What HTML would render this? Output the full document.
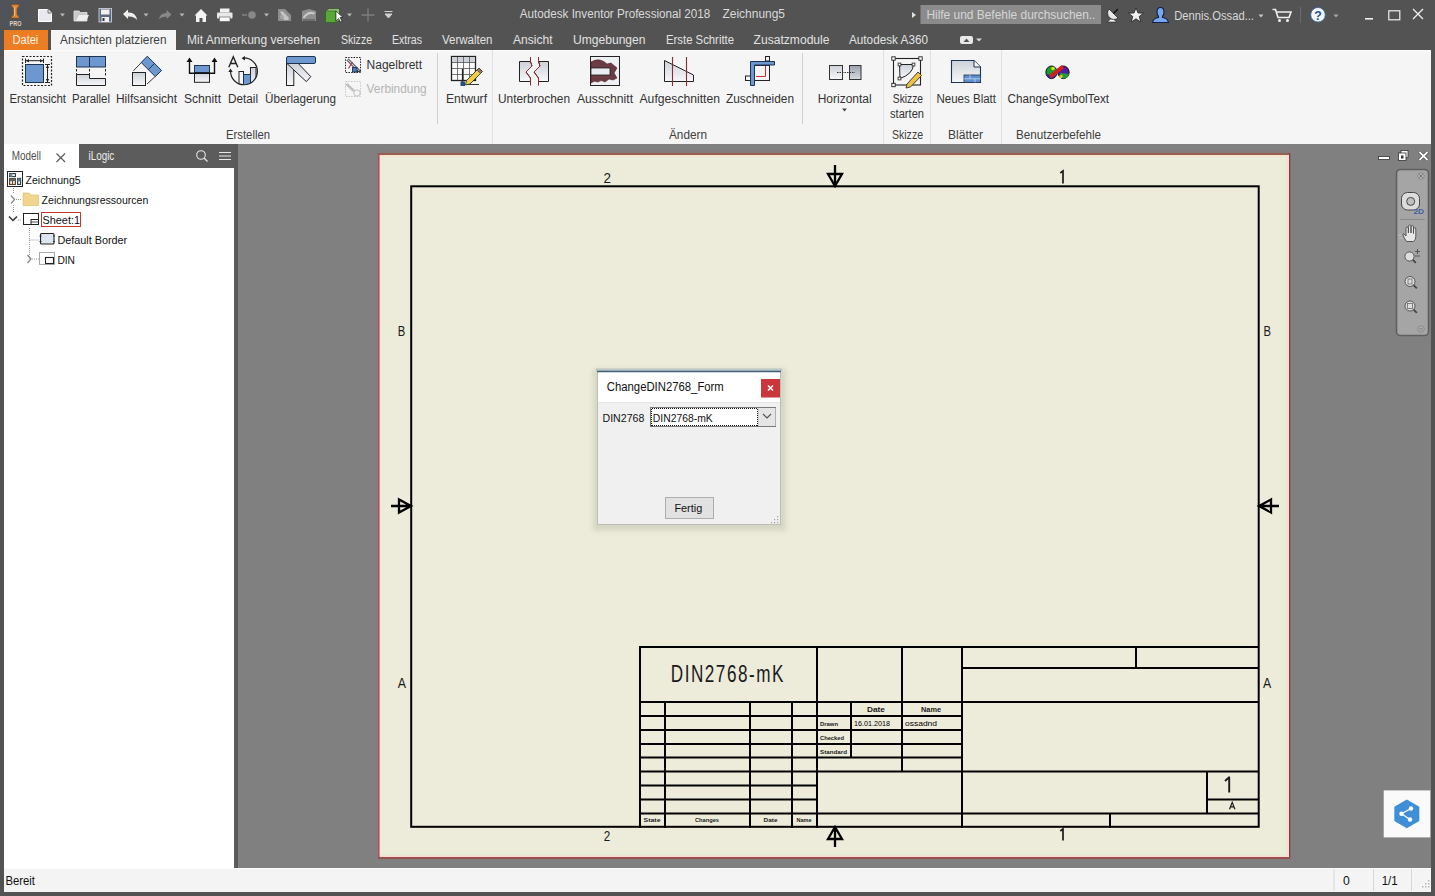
<!DOCTYPE html>
<html><head><meta charset="utf-8"><style>
html,body{margin:0;padding:0;width:1435px;height:896px;overflow:hidden;background:#535353;}
svg{display:block;font-family:"Liberation Sans", sans-serif;}
</style></head><body>
<svg width="1435" height="896" viewBox="0 0 1435 896"><defs><filter id="blur" x="-20%" y="-20%" width="140%" height="140%"><feGaussianBlur stdDeviation="2.5"/></filter><linearGradient id="lg" x1="0" y1="0" x2="0" y2="1"><stop offset="0" stop-color="#cdd2d9"/><stop offset="1" stop-color="#f6f7f9"/></linearGradient><linearGradient id="lg2" x1="0" y1="0" x2="0" y2="1"><stop offset="0" stop-color="#9aa2ac"/><stop offset="1" stop-color="#d8dce2"/></linearGradient></defs>
<rect x="0" y="0" width="1435" height="896" fill="#535353" />
<rect x="4" y="50" width="1427" height="94" fill="#f5f5f5" />
<rect x="4" y="50" width="1427" height="1.5" fill="#fcfcfc" />
<rect x="51" y="30" width="125" height="20" fill="#f5f5f5" />
<rect x="4" y="30" width="44" height="20" fill="#ec7d22" />
<rect x="4" y="144" width="75" height="24" fill="#ffffff" />
<rect x="79" y="144" width="155" height="24" fill="#5c5c5c" />
<rect x="4" y="168" width="230" height="700" fill="#ffffff" />
<rect x="238" y="144" width="1193" height="724" fill="#808080" />
<rect x="4" y="868" width="1427" height="24" fill="#f4f4f4" />
<rect x="4" y="868" width="1427" height="1" fill="#fbfbfb" />
<text x="519.8" y="18" font-size="12" fill="#dadada" font-weight="normal" text-anchor="start" textLength="190.5" lengthAdjust="spacingAndGlyphs" >Autodesk Inventor Professional 2018</text>
<text x="722.5" y="18" font-size="12" fill="#dadada" font-weight="normal" text-anchor="start" textLength="62.5" lengthAdjust="spacingAndGlyphs" >Zeichnung5</text>
<rect x="920.5" y="5" width="180.5" height="19" fill="#8b8b8b" />
<text x="926.4" y="19" font-size="12" fill="#d6d6d6" font-weight="normal" text-anchor="start" textLength="169" lengthAdjust="spacingAndGlyphs" >Hilfe und Befehle durchsuchen..</text>
<path d="M912 12 L916 15 L912 18 Z" fill="#e0e0e0"/>
<text x="1174.2" y="19.5" font-size="12" fill="#d8d8d8" font-weight="normal" text-anchor="start" textLength="79.8" lengthAdjust="spacingAndGlyphs" >Dennis.Ossad...</text>
<text x="12.5" y="43.5" font-size="12" fill="#fff3e6" font-weight="normal" text-anchor="start" textLength="25.8" lengthAdjust="spacingAndGlyphs" >Datei</text>
<text x="60" y="43.5" font-size="12" fill="#404040" font-weight="normal" text-anchor="start" textLength="106.5" lengthAdjust="spacingAndGlyphs" >Ansichten platzieren</text>
<text x="187" y="43.5" font-size="12" fill="#e2e2e2" font-weight="normal" text-anchor="start" textLength="133" lengthAdjust="spacingAndGlyphs" >Mit Anmerkung versehen</text>
<text x="341" y="43.5" font-size="12" fill="#e2e2e2" font-weight="normal" text-anchor="start" textLength="31" lengthAdjust="spacingAndGlyphs" >Skizze</text>
<text x="392" y="43.5" font-size="12" fill="#e2e2e2" font-weight="normal" text-anchor="start" textLength="30" lengthAdjust="spacingAndGlyphs" >Extras</text>
<text x="442" y="43.5" font-size="12" fill="#e2e2e2" font-weight="normal" text-anchor="start" textLength="50.4" lengthAdjust="spacingAndGlyphs" >Verwalten</text>
<text x="513" y="43.5" font-size="12" fill="#e2e2e2" font-weight="normal" text-anchor="start" textLength="39.6" lengthAdjust="spacingAndGlyphs" >Ansicht</text>
<text x="573" y="43.5" font-size="12" fill="#e2e2e2" font-weight="normal" text-anchor="start" textLength="72.5" lengthAdjust="spacingAndGlyphs" >Umgebungen</text>
<text x="666" y="43.5" font-size="12" fill="#e2e2e2" font-weight="normal" text-anchor="start" textLength="68" lengthAdjust="spacingAndGlyphs" >Erste Schritte</text>
<text x="753.6" y="43.5" font-size="12" fill="#e2e2e2" font-weight="normal" text-anchor="start" textLength="75.9" lengthAdjust="spacingAndGlyphs" >Zusatzmodule</text>
<text x="849" y="43.5" font-size="12" fill="#e2e2e2" font-weight="normal" text-anchor="start" textLength="79" lengthAdjust="spacingAndGlyphs" >Autodesk A360</text>
<text x="9.4" y="102.7" font-size="12" fill="#333" font-weight="normal" text-anchor="start" textLength="56.6" lengthAdjust="spacingAndGlyphs" >Erstansicht</text>
<text x="72" y="102.7" font-size="12" fill="#333" font-weight="normal" text-anchor="start" textLength="38" lengthAdjust="spacingAndGlyphs" >Parallel</text>
<text x="116" y="102.7" font-size="12" fill="#333" font-weight="normal" text-anchor="start" textLength="61" lengthAdjust="spacingAndGlyphs" >Hilfsansicht</text>
<text x="184" y="102.7" font-size="12" fill="#333" font-weight="normal" text-anchor="start" textLength="37" lengthAdjust="spacingAndGlyphs" >Schnitt</text>
<text x="228" y="102.7" font-size="12" fill="#333" font-weight="normal" text-anchor="start" textLength="30" lengthAdjust="spacingAndGlyphs" >Detail</text>
<text x="265" y="102.7" font-size="12" fill="#333" font-weight="normal" text-anchor="start" textLength="71" lengthAdjust="spacingAndGlyphs" >Überlagerung</text>
<text x="446" y="102.7" font-size="12" fill="#333" font-weight="normal" text-anchor="start" textLength="41" lengthAdjust="spacingAndGlyphs" >Entwurf</text>
<text x="498" y="102.7" font-size="12" fill="#333" font-weight="normal" text-anchor="start" textLength="72" lengthAdjust="spacingAndGlyphs" >Unterbrochen</text>
<text x="577" y="102.7" font-size="12" fill="#333" font-weight="normal" text-anchor="start" textLength="56" lengthAdjust="spacingAndGlyphs" >Ausschnitt</text>
<text x="639.5" y="102.7" font-size="12" fill="#333" font-weight="normal" text-anchor="start" textLength="80.5" lengthAdjust="spacingAndGlyphs" >Aufgeschnitten</text>
<text x="726" y="102.7" font-size="12" fill="#333" font-weight="normal" text-anchor="start" textLength="68" lengthAdjust="spacingAndGlyphs" >Zuschneiden</text>
<text x="817.7" y="102.7" font-size="12" fill="#333" font-weight="normal" text-anchor="start" textLength="54" lengthAdjust="spacingAndGlyphs" >Horizontal</text>
<text x="892.8" y="102.7" font-size="12" fill="#333" font-weight="normal" text-anchor="start" textLength="30.2" lengthAdjust="spacingAndGlyphs" >Skizze</text>
<text x="936.5" y="102.7" font-size="12" fill="#333" font-weight="normal" text-anchor="start" textLength="59.5" lengthAdjust="spacingAndGlyphs" >Neues Blatt</text>
<text x="1007.5" y="102.7" font-size="12" fill="#333" font-weight="normal" text-anchor="start" textLength="101.5" lengthAdjust="spacingAndGlyphs" >ChangeSymbolText</text>
<text x="890" y="117.6" font-size="12" fill="#333" font-weight="normal" text-anchor="start" textLength="34" lengthAdjust="spacingAndGlyphs" >starten</text>
<text x="366.6" y="68.7" font-size="12" fill="#333" font-weight="normal" text-anchor="start" textLength="55.4" lengthAdjust="spacingAndGlyphs" >Nagelbrett</text>
<text x="366.6" y="92.8" font-size="12" fill="#b4b4b4" font-weight="normal" text-anchor="start" textLength="60" lengthAdjust="spacingAndGlyphs" >Verbindung</text>
<text x="226" y="138.6" font-size="12" fill="#404040" font-weight="normal" text-anchor="start" textLength="44" lengthAdjust="spacingAndGlyphs" >Erstellen</text>
<text x="669" y="138.6" font-size="12" fill="#404040" font-weight="normal" text-anchor="start" textLength="38" lengthAdjust="spacingAndGlyphs" >Ändern</text>
<text x="892" y="138.6" font-size="12" fill="#404040" font-weight="normal" text-anchor="start" textLength="31" lengthAdjust="spacingAndGlyphs" >Skizze</text>
<text x="948" y="138.6" font-size="12" fill="#404040" font-weight="normal" text-anchor="start" textLength="35" lengthAdjust="spacingAndGlyphs" >Blätter</text>
<text x="1016" y="138.6" font-size="12" fill="#404040" font-weight="normal" text-anchor="start" textLength="85" lengthAdjust="spacingAndGlyphs" >Benutzerbefehle</text>
<line x1="492.5" y1="50" x2="492.5" y2="144" stroke="#e0e0e0" stroke-width="1" />
<line x1="883.5" y1="50" x2="883.5" y2="144" stroke="#e0e0e0" stroke-width="1" />
<line x1="930.5" y1="50" x2="930.5" y2="144" stroke="#e0e0e0" stroke-width="1" />
<line x1="1001.5" y1="50" x2="1001.5" y2="144" stroke="#e0e0e0" stroke-width="1" />
<line x1="437.5" y1="53" x2="437.5" y2="124" stroke="#d0d0d0" stroke-width="1" />
<line x1="802.5" y1="53" x2="802.5" y2="124" stroke="#d0d0d0" stroke-width="1" />
<path d="M842 108.5 L847 108.5 L844.5 111.5 Z" fill="#444"/>
<text x="11.8" y="159.7" font-size="12" fill="#505050" font-weight="normal" text-anchor="start" textLength="29.2" lengthAdjust="spacingAndGlyphs" >Modell</text>
<path d="M56.5 153.5 L65 162 M65 153.5 L56.5 162" stroke="#555" stroke-width="1.1"/>
<text x="88.5" y="159.7" font-size="12" fill="#ececec" font-weight="normal" text-anchor="start" textLength="25.8" lengthAdjust="spacingAndGlyphs" >iLogic</text>
<circle cx="201" cy="155" r="4.3" fill="none" stroke="#e8e8e8" stroke-width="1.1"/><path d="M204 158 L207.5 161.5" stroke="#e8e8e8" stroke-width="1.3"/>
<path d="M219 152.5 H231 M219 156 H231 M219 159.5 H231" stroke="#e8e8e8" stroke-width="1.1"/>
<rect x="234" y="144" width="4" height="724" fill="#5a5a5a" />
<text x="25.6" y="183.8" font-size="11" fill="#111" font-weight="normal" text-anchor="start" textLength="55" lengthAdjust="spacingAndGlyphs" >Zeichnung5</text>
<text x="41.6" y="203.7" font-size="11" fill="#111" font-weight="normal" text-anchor="start" textLength="106.7" lengthAdjust="spacingAndGlyphs" >Zeichnungsressourcen</text>
<text x="42.5" y="223.6" font-size="11" fill="#111" font-weight="normal" text-anchor="start" textLength="37.5" lengthAdjust="spacingAndGlyphs" >Sheet:1</text>
<text x="57.4" y="243.5" font-size="11" fill="#111" font-weight="normal" text-anchor="start" textLength="69.8" lengthAdjust="spacingAndGlyphs" >Default Border</text>
<text x="57.4" y="263.5" font-size="11" fill="#111" font-weight="normal" text-anchor="start" textLength="17.6" lengthAdjust="spacingAndGlyphs" >DIN</text>
<rect x="41.5" y="212.5" width="39" height="14" fill="none" stroke="#c0392b" stroke-width="1"/>
<text x="5.5" y="884.6" font-size="12" fill="#111" font-weight="normal" text-anchor="start" textLength="29.5" lengthAdjust="spacingAndGlyphs" >Bereit</text>
<text x="1343" y="884.5" font-size="12" fill="#111" font-weight="normal" text-anchor="start" textLength="6.8" lengthAdjust="spacingAndGlyphs" >0</text>
<text x="1381.7" y="884.5" font-size="12" fill="#111" font-weight="normal" text-anchor="start" textLength="16" lengthAdjust="spacingAndGlyphs" >1/1</text>
<line x1="1334" y1="869" x2="1334" y2="891" stroke="#d8d8d8" stroke-width="1" />
<line x1="1373.5" y1="869" x2="1373.5" y2="891" stroke="#d8d8d8" stroke-width="1" />
<line x1="1411.5" y1="869" x2="1411.5" y2="891" stroke="#d8d8d8" stroke-width="1" />
<rect x="378" y="154" width="912" height="704" fill="#edecda" />
<rect x="1282" y="156" width="5" height="700" fill="#e6efd6" />
<rect x="380" y="853" width="906" height="3" fill="#e8edd8" />
<rect x="1286.5" y="155" width="2.5" height="702" fill="#f8dcd4" />
<rect x="379" y="855.5" width="910" height="1.5" fill="#f8dcd4" />
<rect x="379" y="155" width="910" height="2" fill="#f9e2cf" />
<rect x="378" y="150.5" width="912" height="2.5" fill="#857a7e" />
<rect x="378" y="153" width="912" height="2" fill="#96604f" />
<rect x="378" y="153" width="1.6" height="706" fill="#c24858" />
<rect x="1289" y="153" width="1.3" height="706" fill="#8a3a3a" />
<rect x="378" y="857" width="912" height="2" fill="#9b5050" />
<rect x="411.2" y="186.3" width="847.5" height="640.5" fill="none" stroke="#000" stroke-width="2"/>
<path d="M835 165 V186 M828 174 H842 L835 186 Z" stroke="#000" stroke-width="2.3" fill="none" stroke-linejoin="miter"/>
<path d="M835 847 V827 M828 839 H842 L835 827 Z" stroke="#000" stroke-width="2.3" fill="none" stroke-linejoin="miter"/>
<path d="M391 506 H411 M399 499.5 V512.5 L411 506 Z" stroke="#000" stroke-width="2.3" fill="none" stroke-linejoin="miter"/>
<path d="M1279 506 H1259 M1271 499.5 V512.5 L1259 506 Z" stroke="#000" stroke-width="2.3" fill="none" stroke-linejoin="miter"/>
<text x="603.5" y="182.8" font-size="15.5" fill="#1a1a1a" font-weight="normal" text-anchor="start" textLength="7.5" lengthAdjust="spacingAndGlyphs" >2</text>
<path d="M1060.3 173 L1063 170.9 V183.4" fill="none" stroke="#1a1a1a" stroke-width="1.7"/>
<text x="603.7" y="840.6" font-size="15.5" fill="#1a1a1a" font-weight="normal" text-anchor="start" textLength="6.5" lengthAdjust="spacingAndGlyphs" >2</text>
<path d="M1060.3 831 L1063 828.9 V840.6" fill="none" stroke="#1a1a1a" stroke-width="1.7"/>
<text x="397.8" y="336" font-size="15.5" fill="#1a1a1a" font-weight="normal" text-anchor="start" textLength="7.5" lengthAdjust="spacingAndGlyphs" >B</text>
<text x="1263.5" y="336" font-size="15.5" fill="#1a1a1a" font-weight="normal" text-anchor="start" textLength="7.5" lengthAdjust="spacingAndGlyphs" >B</text>
<text x="397.7" y="687.6" font-size="15.5" fill="#1a1a1a" font-weight="normal" text-anchor="start" textLength="8.2" lengthAdjust="spacingAndGlyphs" >A</text>
<text x="1263" y="687.6" font-size="15.5" fill="#1a1a1a" font-weight="normal" text-anchor="start" textLength="8.2" lengthAdjust="spacingAndGlyphs" >A</text>
<line x1="639" y1="647" x2="1259" y2="647" stroke="#000" stroke-width="2"/>
<line x1="640" y1="646" x2="640" y2="828" stroke="#000" stroke-width="2"/>
<line x1="817" y1="646" x2="817" y2="828" stroke="#000" stroke-width="2"/>
<line x1="902" y1="646" x2="902" y2="771" stroke="#000" stroke-width="2"/>
<line x1="962" y1="646" x2="962" y2="828" stroke="#000" stroke-width="2"/>
<line x1="1136" y1="646" x2="1136" y2="668" stroke="#000" stroke-width="2"/>
<line x1="961" y1="668" x2="1259" y2="668" stroke="#000" stroke-width="2"/>
<line x1="639" y1="702" x2="1259" y2="702" stroke="#000" stroke-width="2"/>
<line x1="639" y1="716" x2="962" y2="716" stroke="#000" stroke-width="2"/>
<line x1="639" y1="730" x2="962" y2="730" stroke="#000" stroke-width="2"/>
<line x1="639" y1="744" x2="962" y2="744" stroke="#000" stroke-width="2"/>
<line x1="639" y1="757.5" x2="962" y2="757.5" stroke="#000" stroke-width="2"/>
<line x1="639" y1="771.5" x2="1259" y2="771.5" stroke="#000" stroke-width="2"/>
<line x1="639" y1="785.5" x2="817" y2="785.5" stroke="#000" stroke-width="2"/>
<line x1="639" y1="799.5" x2="817" y2="799.5" stroke="#000" stroke-width="2"/>
<line x1="639" y1="813.5" x2="1259" y2="813.5" stroke="#000" stroke-width="2"/>
<line x1="665" y1="701" x2="665" y2="828" stroke="#000" stroke-width="2"/>
<line x1="750" y1="701" x2="750" y2="828" stroke="#000" stroke-width="2"/>
<line x1="792" y1="701" x2="792" y2="828" stroke="#000" stroke-width="2"/>
<line x1="851" y1="701" x2="851" y2="758" stroke="#000" stroke-width="2"/>
<line x1="1207" y1="771" x2="1207" y2="814" stroke="#000" stroke-width="2"/>
<line x1="1206" y1="799.5" x2="1259" y2="799.5" stroke="#000" stroke-width="2"/>
<line x1="1110" y1="813" x2="1110" y2="828" stroke="#000" stroke-width="2"/>
<text transform="translate(670.8 681.8) scale(0.72 1)" font-size="23.8" letter-spacing="2.1" fill="#1a1a1a">DIN2768-mK</text>
<path d="M1225 781 L1229.2 777.3 V792.5" fill="none" stroke="#1a1a1a" stroke-width="1.9" stroke-linejoin="round"/>
<path d="M1229.5 809.3 L1232.2 802.3 L1234.9 809.3 M1230.5 806.8 H1234" fill="none" stroke="#1a1a1a" stroke-width="1.2"/>
<text x="876" y="712" font-size="7.5" fill="#1a1a1a" font-weight="bold" text-anchor="middle" textLength="18" lengthAdjust="spacingAndGlyphs" >Date</text>
<text x="931" y="712" font-size="7.5" fill="#1a1a1a" font-weight="bold" text-anchor="middle" textLength="20" lengthAdjust="spacingAndGlyphs" >Name</text>
<text x="820" y="726" font-size="6" fill="#1a1a1a" font-weight="bold" text-anchor="start" textLength="18" lengthAdjust="spacingAndGlyphs" >Drawn</text>
<text x="820" y="740" font-size="6" fill="#1a1a1a" font-weight="bold" text-anchor="start" textLength="24" lengthAdjust="spacingAndGlyphs" >Checked</text>
<text x="820" y="754" font-size="6" fill="#1a1a1a" font-weight="bold" text-anchor="start" textLength="27" lengthAdjust="spacingAndGlyphs" >Standard</text>
<text x="854" y="725.5" font-size="8" fill="#000" font-weight="normal" text-anchor="start" textLength="36" lengthAdjust="spacingAndGlyphs" >16.01.2018</text>
<text x="905" y="725.5" font-size="8" fill="#000" font-weight="normal" text-anchor="start" textLength="32" lengthAdjust="spacingAndGlyphs" >ossadnd</text>
<text x="652" y="822" font-size="6" fill="#1a1a1a" font-weight="bold" text-anchor="middle" textLength="17" lengthAdjust="spacingAndGlyphs" >State</text>
<text x="707" y="822" font-size="6" fill="#1a1a1a" font-weight="bold" text-anchor="middle" textLength="24" lengthAdjust="spacingAndGlyphs" >Changes</text>
<text x="770.5" y="822" font-size="6" fill="#1a1a1a" font-weight="bold" text-anchor="middle" textLength="14" lengthAdjust="spacingAndGlyphs" >Date</text>
<text x="804" y="822" font-size="6" fill="#1a1a1a" font-weight="bold" text-anchor="middle" textLength="15" lengthAdjust="spacingAndGlyphs" >Name</text>
<rect x="593" y="369" width="193" height="162" fill="#3a4a30" opacity="0.13" filter="url(#blur)"/>
<rect x="596" y="368.5" width="186" height="2.5" fill="#b9cac6" />
<rect x="597" y="371" width="184" height="154" fill="#f0f0f0" />
<rect x="597" y="371" width="184" height="31" fill="#ffffff" />
<line x1="597" y1="371.5" x2="781" y2="371.5" stroke="#3d5f7a" stroke-width="1.2" />
<rect x="597.5" y="371.5" width="183" height="153" fill="none" stroke="#bdbdb5" stroke-width="1"/>
<rect x="598" y="402" width="182" height="1" fill="#e6e6e6" />
<line x1="597" y1="371.5" x2="781" y2="371.5" stroke="#40607c" stroke-width="1.3" />
<text x="606.8" y="391" font-size="12" fill="#111" font-weight="normal" text-anchor="start" textLength="117" lengthAdjust="spacingAndGlyphs" >ChangeDIN2768_Form</text>
<rect x="761" y="379" width="19" height="18.5" fill="#c9373b" />
<path d="M768 385.5 L773 390.5 M773 385.5 L768 390.5" stroke="#fff" stroke-width="1.5"/>
<text x="602.5" y="421.6" font-size="11" fill="#111" font-weight="normal" text-anchor="start" textLength="41.8" lengthAdjust="spacingAndGlyphs" >DIN2768</text>
<rect x="650.5" y="407.5" width="125" height="19" fill="#fff" stroke="#7a7a7a" stroke-width="1"/>
<rect x="758.5" y="408" width="17" height="18" fill="#e5e5e5" />
<line x1="758.5" y1="408" x2="758.5" y2="426" stroke="#cfcfcf" stroke-width="1" />
<path d="M763 414 L767 418 L771 414" fill="none" stroke="#555" stroke-width="1.2"/>
<path d="M652 408.5 H758 M652 425.5 H758 M651.5 409 V426 M757.5 409 V426" fill="none" stroke="#111" stroke-width="1" stroke-dasharray="1,1"/>
<text x="652.8" y="421.6" font-size="11" fill="#111" font-weight="normal" text-anchor="start" textLength="60" lengthAdjust="spacingAndGlyphs" >DIN2768-mK</text>
<rect x="665.5" y="497.5" width="48" height="21" fill="#e1e1e1" stroke="#adadad" stroke-width="1"/>
<text x="674.4" y="512.2" font-size="11" fill="#111" font-weight="normal" text-anchor="start" textLength="27.8" lengthAdjust="spacingAndGlyphs" >Fertig</text>
<rect x="777" y="516" width="1.2" height="1.2" fill="#a0a0a0" />
<rect x="774" y="519" width="1.2" height="1.2" fill="#a0a0a0" />
<rect x="777" y="519" width="1.2" height="1.2" fill="#a0a0a0" />
<rect x="771" y="522" width="1.2" height="1.2" fill="#a0a0a0" />
<rect x="774" y="522" width="1.2" height="1.2" fill="#a0a0a0" />
<rect x="777" y="522" width="1.2" height="1.2" fill="#a0a0a0" />
<rect x="1378.5" y="156.5" width="11" height="3" fill="#fff" stroke="#333" stroke-width="0.8"/>
<rect x="1401" y="150.5" width="7" height="7" fill="#fff" stroke="#333" stroke-width="0.8"/><rect x="1398.5" y="153" width="7.5" height="7.5" fill="#fff" stroke="#333" stroke-width="0.8"/><rect x="1401" y="155.5" width="2.5" height="3" fill="#333"/>
<path d="M1419.5 152 L1427.5 160 M1427.5 152 L1419.5 160" stroke="#333" stroke-width="3"/><path d="M1419.5 152 L1427.5 160 M1427.5 152 L1419.5 160" stroke="#fff" stroke-width="1.8"/>
<rect x="1396.5" y="169.5" width="32" height="166" rx="4" fill="#a5a5a5" stroke="#5f5f5f" stroke-width="1.6"/>
<line x1="1400" y1="219.5" x2="1425" y2="219.5" stroke="#8a8a8a" stroke-width="1" />
<circle cx="1421" cy="176" r="3.2" fill="#b5b5b5" stroke="#7a7a7a" stroke-width="0.7"/><path d="M1419.3 174.3 L1422.7 177.7 M1422.7 174.3 L1419.3 177.7" stroke="#6a6a6a" stroke-width="0.9"/>
<circle cx="1421" cy="329" r="3.2" fill="#b5b5b5" stroke="#7a7a7a" stroke-width="0.7"/><path d="M1419.3 328.3 H1422.7 M1419.3 330 H1422.7" stroke="#6a6a6a" stroke-width="0.7"/>
<rect x="1401.5" y="192.5" width="18" height="17.5" rx="6" fill="#dcdcdc" stroke="#474747" stroke-width="1"/><circle cx="1410.7" cy="201.4" r="4" fill="#c0c0c0" stroke="#474747" stroke-width="1"/>
<text x="1413.4" y="214" font-size="8" fill="#3d5fa8" font-weight="bold" text-anchor="start" textLength="10.6" lengthAdjust="spacingAndGlyphs" >2D</text>
<path d="M1406.5 241.5 Q1404 238 1403 235 Q1402.5 233.5 1404 233.8 L1406 236 V228.5 Q1406 227 1407.2 227 Q1408.4 227 1408.4 228.5 V233 V226.5 Q1408.4 225 1409.7 225 Q1411 225 1411 226.5 V233 V227 Q1411 225.6 1412.2 225.6 Q1413.5 225.6 1413.5 227 V233.5 V229 Q1413.5 227.8 1414.6 227.8 Q1415.8 227.8 1415.8 229 V236.5 Q1415.8 240 1413.5 241.5 Z" fill="#e6e6e6" stroke="#4a4a4a" stroke-width="0.9"/>
<path d="M1398 235 H1402 M1399 238 H1403" stroke="#c8c8c8" stroke-width="0.8"/>
<circle cx="1409.5" cy="256.5" r="4.6" fill="#dedede" stroke="#555" stroke-width="1"/><path d="M1412.8 259.8 L1415.8 262.8" stroke="#444" stroke-width="1.8"/><path d="M1415 251.5 H1420 M1417.5 249 V254 M1415 256 H1420" stroke="#444" stroke-width="0.8"/>
<circle cx="1410" cy="281.5" r="5" fill="#dedede" stroke="#555" stroke-width="1"/><rect x="1408" y="279" width="4" height="5" fill="none" stroke="#666" stroke-width="0.8"/><path d="M1413.6 285.1 L1416.8 288.3" stroke="#444" stroke-width="1.8"/>
<circle cx="1410" cy="306" r="5" fill="#dedede" stroke="#555" stroke-width="1"/><rect x="1407.5" y="303.5" width="5" height="5" fill="none" stroke="#666" stroke-width="0.8"/><path d="M1413.6 309.6 L1416.8 312.8" stroke="#444" stroke-width="1.8"/>
<rect x="1383.7" y="790.4" width="46.6" height="47" fill="#fafafa" />
<path d="M1406.8 799.5 L1419.3 806.7 L1419.3 821.1 L1406.8 828.3 L1394.3 821.1 L1394.3 806.7 Z" fill="#3f8fd8"/>
<circle cx="1411" cy="808.5" r="2.2" fill="#fff"/><circle cx="1401.5" cy="813.8" r="2.2" fill="#fff"/><circle cx="1410" cy="819.5" r="2.2" fill="#fff"/><path d="M1411 808.5 L1401.5 813.8 L1410 819.5" stroke="#fff" stroke-width="1.3" fill="none"/>
<rect x="1428" y="880" width="1.5" height="1.5" fill="#b8b8b8" />
<rect x="1425" y="883" width="1.5" height="1.5" fill="#b8b8b8" />
<rect x="1428" y="883" width="1.5" height="1.5" fill="#b8b8b8" />
<rect x="1422" y="886" width="1.5" height="1.5" fill="#b8b8b8" />
<rect x="1425" y="886" width="1.5" height="1.5" fill="#b8b8b8" />
<rect x="1428" y="886" width="1.5" height="1.5" fill="#b8b8b8" />
<rect x="22.5" y="56.5" width="29" height="29" fill="none" stroke="#222" stroke-width="1.2" stroke-dasharray="2,1.5"/>
<rect x="25.5" y="64.5" width="18" height="18" fill="#6d97cf" stroke="#1d3352" stroke-width="1"/>
<path d="M25.5 58.5 V63 M43.5 58.5 V63 M26 60.7 H43" stroke="#222" stroke-width="1"/><path d="M26 60.7 L29 59 V62.4 Z M43 60.7 L40 59 V62.4 Z" fill="#222"/>
<path d="M45 64.5 H50 M45 82.5 H50 M47.5 65 V82" stroke="#222" stroke-width="1"/><path d="M47.5 65 L45.8 68 H49.2 Z M47.5 82 L45.8 79 H49.2 Z" fill="#222"/>
<rect x="76.5" y="56.5" width="29" height="10.5" fill="#6d97cf" stroke="#1d3352" stroke-width="1"/>
<path d="M89.5 56.5 V67" stroke="#1d3352" stroke-width="1"/>
<path d="M76.5 69 V77 M89.5 69 V77 M105.5 69 V77" stroke="#222" stroke-width="1" stroke-dasharray="2.5,1.5"/>
<path d="M76.5 74.5 H89.5 V78.5 H105.5 V85.5 H76.5 Z" fill="url(#lg)" stroke="#222" stroke-width="1"/>
<rect x="132.5" y="72.5" width="13" height="13" fill="url(#lg)" stroke="#222" stroke-width="1"/>
<path d="M133.4 70.8 L141.4 62.5 M147 84 L155.3 76.4" stroke="#222" stroke-width="0.9"/>
<path d="M147.3 56.2 L161.6 70.5 L155.3 76.6 L141.2 62.5 Z" fill="#6d97cf" stroke="#1d3352" stroke-width="1"/>
<path d="M154.5 63.4 L148.3 69.6" stroke="#1d3352" stroke-width="1"/>
<rect x="194.5" y="72.5" width="15" height="9.8" fill="url(#lg)" stroke="#222" stroke-width="1"/>
<rect x="194.5" y="65.5" width="15" height="7" fill="#6d97cf" stroke="#1d3352" stroke-width="1"/>
<path d="M189.5 62 V73.3 H214.5 V62" fill="none" stroke="#111" stroke-width="1.4"/>
<path d="M189.5 57.5 L186.5 62 H192.5 Z M214.5 57.5 L211.5 62 H217.5 Z" fill="#111"/>
<path d="M228.8 67.3 L233.3 56.8 L237.8 67.3 M230.5 63.5 H236" fill="none" stroke="#222" stroke-width="1.4"/>
<clipPath id="dc"><circle cx="244" cy="71.4" r="13.2"/></clipPath>
<g clip-path="url(#dc)"><rect x="250.5" y="67.5" width="5.5" height="20" fill="url(#lg)" stroke="#222" stroke-width="1"/>
<rect x="239" y="71.5" width="4.5" height="20" fill="#f4f6fa" stroke="#222" stroke-width="1"/>
<rect x="243.5" y="74.5" width="7" height="20" fill="#6d97cf" stroke="#1d3352" stroke-width="1"/></g>
<path d="M243 58 A13.4 13.4 0 1 1 230.6 71" fill="none" stroke="#222" stroke-width="1.2"/>
<path d="M241.5 58.3 L245 56 V60.6 Z M230.5 68.5 L228.3 72 H232.7 Z" fill="#222"/>
<rect x="286.5" y="63" width="7.3" height="22.5" fill="url(#lg)" stroke="#222" stroke-width="1"/>
<path d="M287 63.5 L298.3 63.5 L310.8 76.7 L306.3 81.6 Z" fill="url(#lg)" stroke="#222" stroke-width="1"/>
<rect x="286.5" y="56.5" width="29" height="7" rx="1.5" fill="#6d97cf" stroke="#1d3352" stroke-width="1"/>
<rect x="345.5" y="57.5" width="15" height="15" fill="none" stroke="#222" stroke-width="1" stroke-dasharray="1.5,1.2"/>
<path d="M347.5 59.5 L358.5 70.5" stroke="#333" stroke-width="2.8"/><path d="M347.5 59.5 L358.5 70.5" stroke="#c8c8d8" stroke-width="1.2"/>
<path d="M352.5 62 L348.5 68.5" stroke="#b03060" stroke-width="1.2"/>
<rect x="352.5" y="67.5" width="4.5" height="4.5" fill="#4a7ab8" stroke="#1d3352" stroke-width="0.9"/>
<path d="M357 71.5 H360.5 L359 69.5" fill="none" stroke="#222" stroke-width="0.9"/>
<rect x="345.5" y="81.5" width="15" height="15" fill="none" stroke="#c8c8c8" stroke-width="1" stroke-dasharray="1.5,1.2"/>
<path d="M346.5 84 L354 91" stroke="#c0c0c0" stroke-width="2.5"/><circle cx="357" cy="93" r="3.2" fill="#f5f5f5" stroke="#c0c0c0" stroke-width="1"/>
<rect x="451.5" y="56.5" width="24" height="24" fill="#fafafa" stroke="#222" stroke-width="1.3"/>
<rect x="452" y="57" width="23" height="6" fill="#cfd3d8"/>
<path d="M457.5 57 V80 M463.5 57 V80 M469.5 57 V80 M452 62.5 H475 M452 68.5 H475 M452 74.5 H475" stroke="#555" stroke-width="0.8"/>
<path d="M462.5 69 V82" stroke="#222" stroke-width="1.2"/><rect x="460.5" y="81.5" width="4.5" height="4.5" fill="#23507f"/>
<path d="M466 84.5 H479" stroke="#333" stroke-width="1"/>
<path d="M466.5 80.5 L477 70 L480.5 73.5 L470 84 L465.5 85 Z" fill="#f0d040" stroke="#333" stroke-width="0.9"/><path d="M477 70 L479 68 L482.5 71.5 L480.5 73.5" fill="#a07060" stroke="#333" stroke-width="0.9"/>
<path d="M530.5 61.5 H519.5 V81.5 H530.5 L530.5 78 L526 72 L532 66 L530.5 61.5" fill="url(#lg)" stroke="#222" stroke-width="1"/>
<path d="M538.5 61.5 H548.5 V81.5 H538.5 L538.5 78 L534 72 L540 66 L538.5 61.5" fill="url(#lg)" stroke="#222" stroke-width="1"/>
<path d="M530.5 57 V61.5 L532 66 L526 72 L530.5 78 V85.5 M538.5 57 V61.5 L540 66 L534 72 L538.5 78 V85.5" fill="none" stroke="#8b2b2b" stroke-width="1"/>
<rect x="590.5" y="56.5" width="29" height="29" fill="#eef0f3" stroke="#222" stroke-width="1"/>
<path d="M591 62 Q596 59 600 60 Q604 61 607 64 L611 63 L617 68 L614 73 L617 78 L613 80 L609 79 L605 82 Q601 79 598 82 Q594 80 591 83 Z" fill="#6b3c44" stroke="#4a2020" stroke-width="0.6"/>
<rect x="591" y="68" width="19" height="7" fill="#e8ecf0" stroke="#222" stroke-width="0.8"/>
<path d="M664.5 60.5 L693.5 75 V81.5 H664.5 Z" fill="url(#lg)" stroke="#222" stroke-width="1"/>
<path d="M672.5 57 V86 M686.5 57 V86" stroke="#8b2b2b" stroke-width="1.1"/>
<rect x="750.5" y="65.5" width="19" height="15" fill="none" stroke="#222" stroke-width="1"/>
<rect x="745.5" y="76" width="5" height="4.5" fill="#f5f5f5" stroke="#222" stroke-width="1"/>
<rect x="765.5" y="56.5" width="4" height="4.5" fill="#f5f5f5" stroke="#222" stroke-width="1"/>
<path d="M750.5 61.5 H774.5 V65 H754.5 V85.5 H750.5 Z" fill="#6d97cf" stroke="#1d3352" stroke-width="1"/>
<path d="M756 76.5 H765.5 V66" fill="none" stroke="#c03030" stroke-width="1"/>
<rect x="829.5" y="65.5" width="13" height="14" fill="url(#lg)" stroke="#333" stroke-width="1"/>
<rect x="849.5" y="65.5" width="11.5" height="14" fill="url(#lg2)" stroke="#333" stroke-width="1"/>
<path d="M837 72.5 H855" stroke="#333" stroke-width="1" stroke-dasharray="1.5,1"/>
<rect x="893.5" y="58.5" width="27" height="26.5" fill="none" stroke="#222" stroke-width="1.1"/>
<rect x="891.8" y="56.8" width="3.4" height="3.4" fill="#fff" stroke="#222" stroke-width="0.9"/>
<rect x="918.8" y="56.8" width="3.4" height="3.4" fill="#fff" stroke="#222" stroke-width="0.9"/>
<rect x="891.8" y="83.3" width="3.4" height="3.4" fill="#fff" stroke="#222" stroke-width="0.9"/>
<path d="M899.5 64.5 H913.5 Q913 74 900 78.5 Z" fill="url(#lg)" stroke="#222" stroke-width="1"/>
<rect x="898.1" y="63.1" width="2.8" height="2.8" fill="#fff" stroke="#222" stroke-width="0.8"/>
<rect x="912.1" y="63.1" width="2.8" height="2.8" fill="#fff" stroke="#222" stroke-width="0.8"/>
<rect x="898.1" y="77.1" width="2.8" height="2.8" fill="#fff" stroke="#222" stroke-width="0.8"/>
<path d="M907 84 L918 72 L921.5 75.5 L910.5 87 L906 88 Z" fill="#f0c040" stroke="#333" stroke-width="0.9"/>
<path d="M951.5 60.5 H974 L980.5 67 V82.5 H951.5 Z" fill="url(#lg)" stroke="#1d3352" stroke-width="1.1"/>
<path d="M974 60.5 V67 H980.5" fill="#f8f8f8" stroke="#1d3352" stroke-width="1"/>
<rect x="964" y="75" width="16.5" height="7.5" fill="#5f8fcf" stroke="#1d3352" stroke-width="0.8"/>
<path d="M964 78.8 H980.5 M970 75 V78.8 M975 78.8 V82.5" stroke="#cfe0f5" stroke-width="0.7"/>
<ellipse cx="1051.5" cy="72.3" rx="5.6" ry="6.3" fill="#1a9a2a" stroke="#111" stroke-width="1"/>
<ellipse cx="1063.5" cy="72.3" rx="5.6" ry="6.3" fill="#5020a0" stroke="#111" stroke-width="1"/>
<path d="M1046.5 74 Q1048 79 1052 78.5 L1056 76 Z" fill="#2020c0"/><path d="M1060 73 Q1061 78.5 1065 78.5 Q1068 78 1069 74 Z" fill="#20a030"/>
<path d="M1050 77 L1063 66.5" stroke="#d02020" stroke-width="4"/>
<circle cx="1053" cy="68.5" r="1.8" fill="#d8e020"/><circle cx="1061" cy="76.5" r="1.8" fill="#e0c020"/>
<rect x="0" y="0" width="28" height="28" fill="#465566" opacity="0.35" filter="url(#blur)"/>
<path d="M11 5 Q15.3 3.5 19.6 5 L18.5 7 Q17 7.5 17 9 V14 Q17 15.5 18.5 16 L19.6 18 H11 L12.1 16 Q13.6 15.5 13.6 14 V9 Q13.6 7.5 12.1 7 Z" fill="#d98a3a" stroke="#8a4a18" stroke-width="0.7"/>
<path d="M14.6 7 V15.5" stroke="#f5c080" stroke-width="1"/>
<text x="9.6" y="25.8" font-size="6.5" fill="#e8d0b8" font-weight="bold" text-anchor="start" textLength="11.8" lengthAdjust="spacingAndGlyphs" >PRO</text>
<path d="M38.5 9.5 H48 L51.5 13 V21.5 H38.5 Z" fill="#e8eaf0" stroke="#fff" stroke-width="1"/><path d="M48 9.5 V13 H51.5" fill="none" stroke="#555" stroke-width="0.8"/>
<path d="M60.0 13.5 H65.0 L62.5 16.5 Z" fill="#b8b8b8"/>
<path d="M143.5 13.5 H148.5 L146 16.5 Z" fill="#b8b8b8"/>
<path d="M179.5 13.5 H184.5 L182 16.5 Z" fill="#b8b8b8"/>
<path d="M264.0 13.5 H269.0 L266.5 16.5 Z" fill="#b8b8b8"/>
<path d="M347.0 13.5 H352.0 L349.5 16.5 Z" fill="#b8b8b8"/>
<path d="M74 11 H79 L80.5 12.5 H87 V21 H74 Z" fill="#c9c9c9" stroke="#e8e8e8" stroke-width="0.8"/><path d="M76 21 L79 15 H89 L86 21 Z" fill="#eeeeee"/>
<rect x="99" y="8.5" width="12.5" height="13.5" fill="#5a6a80" stroke="#d8dce4" stroke-width="0.8"/><rect x="101" y="9.5" width="8.5" height="5" fill="#f0f0f0"/><rect x="101.5" y="17" width="7.5" height="5" fill="#f0f0f0"/><rect x="102.5" y="18" width="2" height="3" fill="#333"/>
<path d="M123 14 L128 9.5 V12.5 Q136 12 137 20 Q134 16 128 16.5 V19 Z" fill="#f0f0f0"/>
<path d="M171.5 14.5 L166.5 10 V13 Q160 13 159 19 Q162 16.5 166.5 16.5 V19 Z" fill="#888"/>
<path d="M194.5 15.5 L201 9 L207.5 15.5 H206 V22 H202.5 V18 H199.5 V22 H196 V15.5 Z" fill="#f2f2f2"/>
<rect x="220" y="8.5" width="9.5" height="4" fill="#f0f0f0"/><rect x="217" y="12.5" width="15.5" height="6" rx="1" fill="#e8e8e8"/><rect x="219.5" y="17" width="10.5" height="4.5" fill="#f8f8f8" stroke="#555" stroke-width="0.6"/>
<circle cx="252" cy="15" r="3.8" fill="#888"/><path d="M242 15 H247" stroke="#777" stroke-width="2"/>
<path d="M278 9 H285 L291 15 V21 H278 Z" fill="#8e8e8e"/><path d="M280 11.5 L283 11.5 L289 18 L288 20 H284 Z" fill="#c4c4c4"/><circle cx="282" cy="17" r="2" fill="#a8a8a8"/>
<path d="M302 11 L309 9 L316 11 V21 H302 Z" fill="#8e8e8e"/><path d="M303.5 18 Q308 11 314.5 13.5" stroke="#c8c8c8" stroke-width="2.2" fill="none"/><rect x="303" y="19" width="12" height="2" fill="#6e6e6e"/>
<path d="M325.5 11 L329 8.5 H339.5 V20 L336 22.5 H325.5 Z" fill="#8fc070" stroke="#333" stroke-width="0.6"/><rect x="325.5" y="11" width="10.5" height="11.5" fill="#58a838" stroke="#2a5a20" stroke-width="0.6"/>
<path d="M336 11 L336 21 L338.5 18.5 L340.5 22 L342 21 L340 17.5 L343 17.5 Z" fill="#fff" stroke="#111" stroke-width="0.6"/>
<path d="M368 8.5 V21.5 M361.5 15 H374.5" stroke="#7d7d7d" stroke-width="1.3"/>
<path d="M384.5 11.5 H392.5 M385 14 H392 L388.5 18 Z" stroke="#d0d0d0" stroke-width="1" fill="#d0d0d0"/>
<path d="M1110.5 19 L1107.5 22 H1116.5 L1113.5 19 Z" fill="#f2f2f2" stroke="#222" stroke-width="0.6"/>
<path d="M1109 9 L1118 18 A6.4 6.4 0 0 1 1109 9 Z" fill="#e8e8e8" stroke="#222" stroke-width="0.7"/>
<path d="M1113.5 13.5 L1118 9" stroke="#111" stroke-width="1.4"/>
<path d="M1136 8 L1138 13 L1143.5 13.2 L1139.2 16.5 L1140.8 22 L1136 18.8 L1131.2 22 L1132.8 16.5 L1128.5 13.2 L1134 13 Z" fill="#f0f0f0" stroke="#222" stroke-width="0.8"/>
<path d="M1152.5 22.5 Q1153.5 18 1158.5 17.5 V16.5 Q1157 15 1157 12 Q1157 7.5 1160.5 7.5 Q1164 7.5 1164 12 Q1164 15 1162.5 16.5 V17.5 Q1167.5 18 1168.5 22.5 Z" fill="#7aa6ee" stroke="#0f1f4a" stroke-width="1.1"/>
<path d="M1258.5 14.5 H1263.5 L1261 17.5 Z" fill="#c8c8c8"/>
<path d="M1272.5 9.5 H1275.5 L1278 17.5 H1289 L1291 12 H1277" fill="none" stroke="#f0f0f0" stroke-width="1.6"/><circle cx="1279.5" cy="20.5" r="1.5" fill="#f0f0f0"/><circle cx="1287.5" cy="20.5" r="1.5" fill="#f0f0f0"/>
<line x1="1300.5" y1="7" x2="1300.5" y2="23" stroke="#6a6a6a" stroke-width="1" />
<circle cx="1318" cy="14.8" r="7.3" fill="#f4f6fa" stroke="#3060a0" stroke-width="0.8"/>
<text x="1314.2" y="19.5" font-size="12" fill="#1f4f9a" font-weight="bold" text-anchor="start" textLength="7.5" lengthAdjust="spacingAndGlyphs" >?</text>
<path d="M1333.5 14.5 H1338.5 L1336 17.5 Z" fill="#aaa"/>
<rect x="1365" y="18" width="8" height="1.6" fill="#f0f0f0"/>
<rect x="1388.8" y="10.8" width="11" height="9" fill="none" stroke="#f0f0f0" stroke-width="1.2"/>
<path d="M1413 9 L1423 19 M1423 9 L1413 19" stroke="#f0f0f0" stroke-width="1.3"/>
<rect x="960" y="36" width="13" height="8" rx="2" fill="#e8e8e8"/><path d="M963.5 42 L966.5 38.5 L969.5 42 Z" fill="#555"/><path d="M976 38.5 H982 L979 41.5 Z" fill="#d8d8d8"/>
<rect x="7.5" y="171.5" width="15" height="15" fill="#fff" stroke="#222" stroke-width="1"/>
<rect x="9.6" y="173.6" width="5.8" height="3" fill="#fff" stroke="#23384a" stroke-width="1.1"/><rect x="9.6" y="173.6" width="2.8" height="3" fill="#7a8a96"/>
<rect x="9.6" y="178.6" width="5.8" height="5.8" fill="#fdf3e0" stroke="#5a3a1a" stroke-width="1.1"/><rect x="9.6" y="178.6" width="5.8" height="2.6" fill="#5a6470"/><path d="M12.5 181 V184.4" stroke="#5a3a1a" stroke-width="0.9"/>
<rect x="17.6" y="178.4" width="3" height="6" fill="#fdf8e8" stroke="#23384a" stroke-width="1.1"/><rect x="17.6" y="178.4" width="3" height="3" fill="#5a7a90"/>
<path d="M23 193 H29 L31 195 H38.5 V205.5 H23 Z" fill="#f1d58f" stroke="#d8b860" stroke-width="0.6"/>
<path d="M11 195.5 L14.5 199.5 L11 203.5" fill="none" stroke="#888" stroke-width="1.3"/>
<path d="M9 216.5 L13 220.5 L17 216.5" fill="none" stroke="#333" stroke-width="1.5"/>
<path d="M27.5 255 L31 259 L27.5 263" fill="none" stroke="#888" stroke-width="1.3"/>
<path d="M13.5 188 V193 M13.5 205 V213 M16 199.5 H22 M18 220 H22 M29.5 228 V259 M29.5 240 H39 M32 259 H39" stroke="#999" stroke-width="1" stroke-dasharray="1,1"/>
<rect x="23.5" y="213.5" width="15" height="11" fill="#fff" stroke="#222" stroke-width="1"/><rect x="31" y="219.5" width="7.5" height="5" fill="#fff" stroke="#222" stroke-width="1"/><path d="M31 222 H38.5" stroke="#222" stroke-width="0.8"/>
<rect x="40.5" y="233.5" width="13.5" height="10.5" rx="1" fill="#dde6f0" stroke="#222" stroke-width="1.1"/><path d="M39.5 236 H41.5 M39.5 241.5 H41.5 M53 236 H55 M53 241.5 H55" stroke="#222" stroke-width="0.8"/>
<rect x="39.5" y="252.5" width="15" height="12" fill="#fff" stroke="#aaa" stroke-width="1"/><rect x="45.5" y="257.5" width="8" height="6" fill="#fff" stroke="#222" stroke-width="1.1"/>
</svg>
</body></html>
